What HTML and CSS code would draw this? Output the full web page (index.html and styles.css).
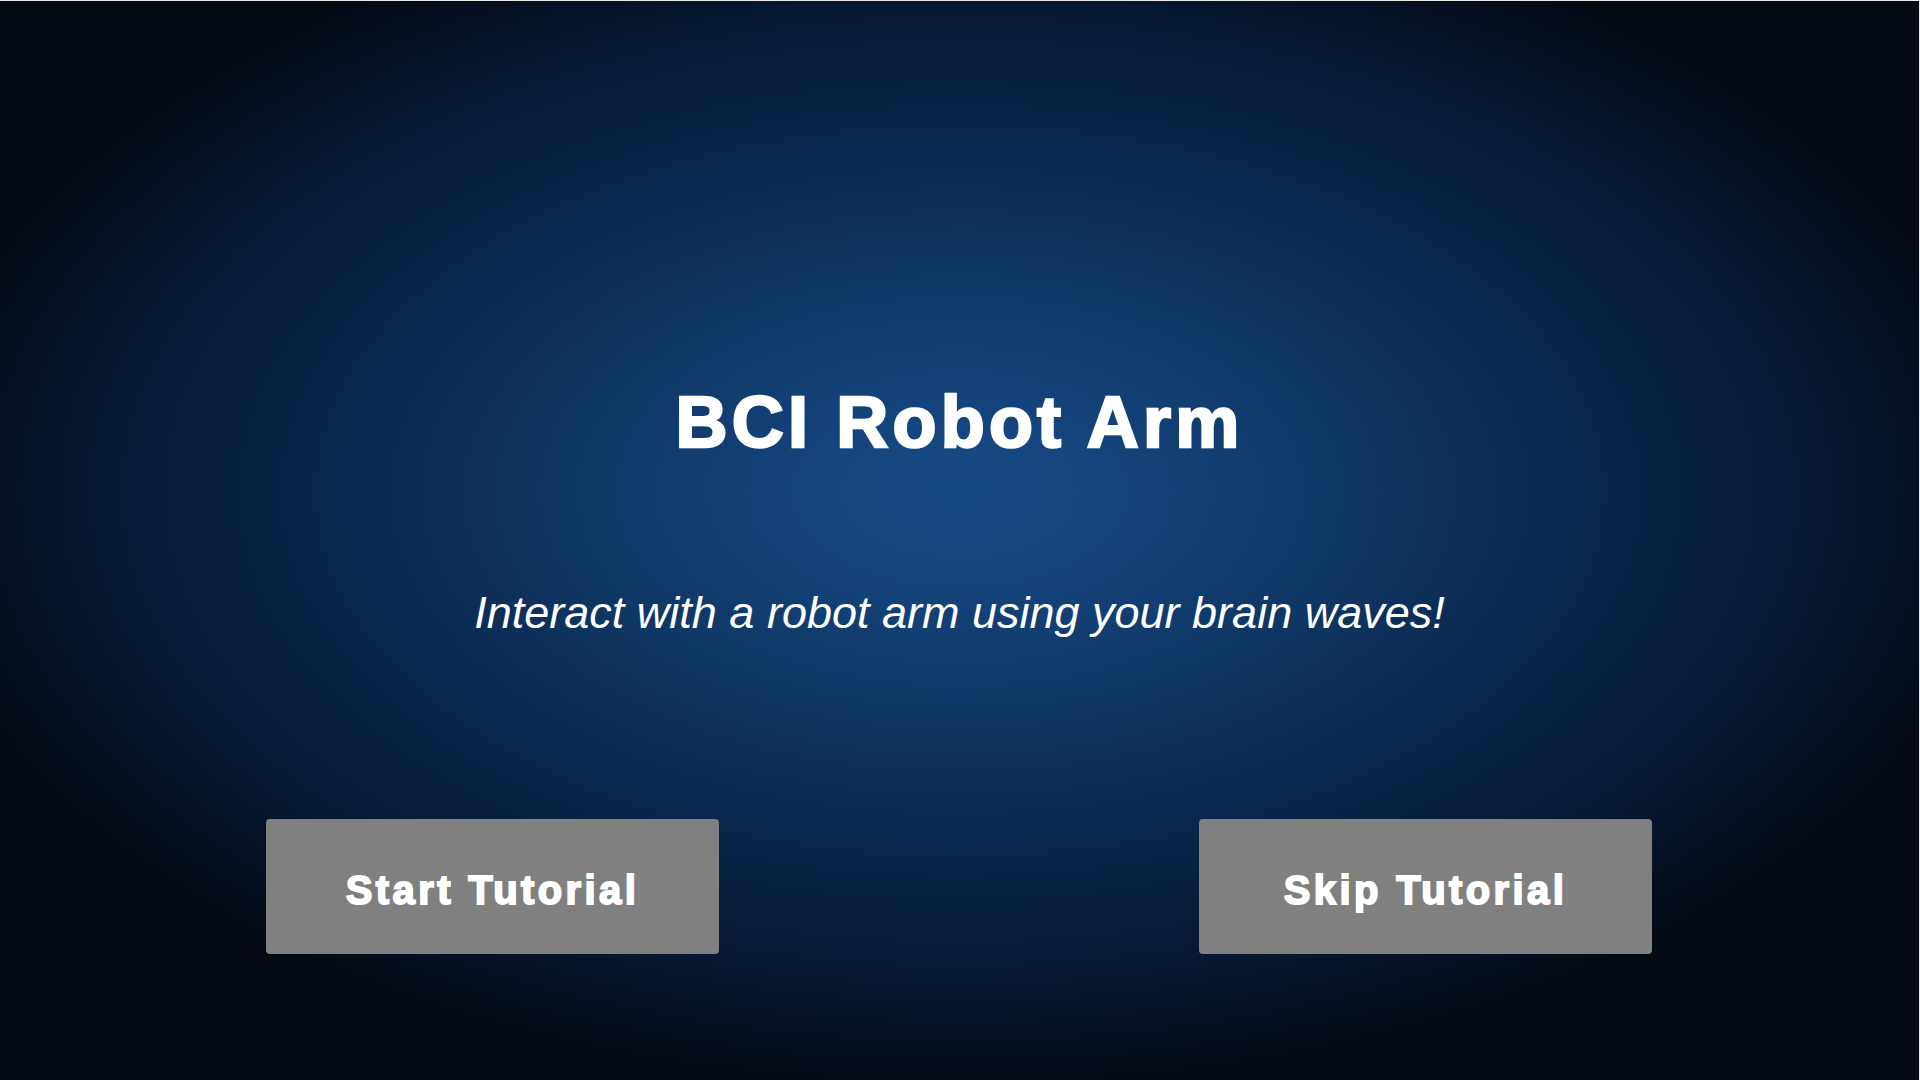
FILE: index.html
```html
<!DOCTYPE html>
<html>
<head>
<meta charset="utf-8">
<title>BCI Robot Arm</title>
<link rel="stylesheet" href="styles.css">
</head>
<body>
<main class="screen">
  <h1 class="title">BCI Robot Arm</h1>
  <p class="subtitle">Interact with a robot arm using your brain waves!</p>
  <div class="actions">
    <button class="btn">Start Tutorial</button>
    <button class="btn">Skip Tutorial</button>
  </div>
</main>
</body>
</html>
```

FILE: styles.css
```css
html, body {
  margin: 0;
  padding: 0;
  background: #e8e8e8;
  overflow: hidden;
}

.screen {
  box-sizing: border-box;
  width: 1919px;
  height: 1079px;
  margin-top: 1px;
  display: flex;
  flex-direction: column;
  align-items: center;
  padding-top: 385px;
  background-color: #040a14;
  background-image: radial-gradient(ellipse 1060px 600px at 960px 490px,
    #164a86 0%, #134279 18%, #0e3561 40%, #0a264b 60%, #071a35 78%, #050f20 92%, #040a14 100%);
  font-family: "Liberation Sans", Arial, sans-serif;
  color: #ffffff;
}

.title {
  margin: 0;
  font-size: 72px;
  line-height: 72px;
  font-weight: 700;
  letter-spacing: 4.2px;
  -webkit-text-stroke: 2.5px #ffffff;
}

.subtitle {
  margin: 132px 0 0;
  font-size: 45px;
  line-height: 45px;
  font-style: italic;
  font-weight: 400;
}

.actions {
  align-self: flex-start;
  margin: 184px 0 0 266px;
  width: 1386px;
  display: flex;
  justify-content: space-between;
}

.btn {
  width: 453px;
  height: 135px;
  border: none;
  border-radius: 4px;
  background: #808080;
  color: #ffffff;
  font-family: "Liberation Sans", Arial, sans-serif;
  font-size: 40px;
  line-height: 40px;
  font-weight: 700;
  letter-spacing: 3.4px;
  -webkit-text-stroke: 1.8px #ffffff;
  padding: 7px 0 0;
  display: flex;
  align-items: center;
  justify-content: center;
}
```
